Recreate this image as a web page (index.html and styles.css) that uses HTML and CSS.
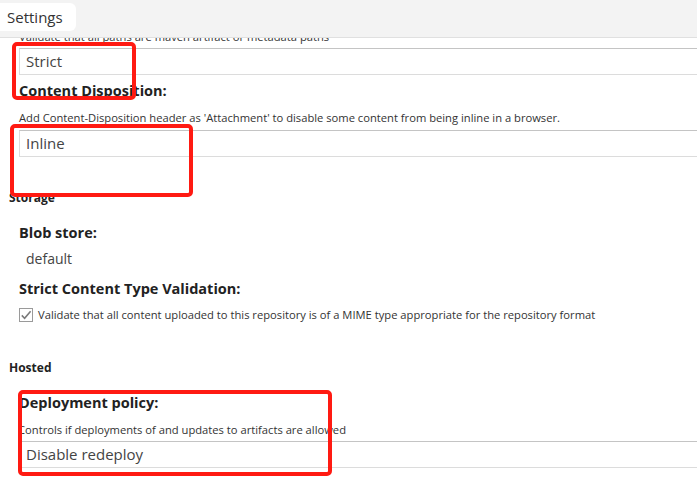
FILE: index.html
```html
<!DOCTYPE html>
<html>
<head>
<meta charset="utf-8">
<link rel="stylesheet" href="styles.css">
</head>
<body>
<div class="page">
  <div class="header">
    <div class="tab">Settings</div>
  </div>
  <div class="content">
    <div class="desc first">Validate that all paths are maven artifact or metadata paths</div>
    <div class="field field-a"><span>Strict</span></div>
    <div class="label l-cd">Content Disposition:</div>
    <div class="desc d-cd">Add Content-Disposition header as 'Attachment' to disable some content from being inline in a browser.</div>
    <div class="field field-b"><span>Inline</span></div>
    <div class="section s-storage">Storage</div>
    <div class="label l-blob">Blob store:</div>
    <div class="value">default</div>
    <div class="label l-strict">Strict Content Type Validation:</div>
    <div class="check-row">
      <svg class="checkbox" width="14" height="14" viewBox="0 0 14 14">
        <rect x="0.5" y="0.5" width="13" height="13" fill="#fff" stroke="#9a9a9a"/>
        <path d="M2.8 7.4 L5.6 10.2 L11.6 3.2" fill="none" stroke="#7a7a7a" stroke-width="1.6"/>
      </svg>
      <span class="desc inline">Validate that all content uploaded to this repository is of a MIME type appropriate for the repository format</span>
    </div>
    <div class="section s-hosted">Hosted</div>
    <div class="label l-deploy">Deployment policy:</div>
    <div class="desc d-deploy">Controls if deployments of and updates to artifacts are allowed</div>
    <div class="field field-c"><span>Disable redeploy</span></div>
  </div>
  <div class="mark m1"></div>
  <div class="mark m2"></div>
  <div class="mark m3"></div>
</div>
</body>
</html>
```
FILE: styles.css
```css
html, body {
  margin: 0;
  padding: 0;
  background: #fff;
}
.page {
  position: relative;
  width: 697px;
  height: 478px;
  overflow: hidden;
  font-family: "Open Sans", "Liberation Sans", sans-serif;
  color: #333;
}
.header {
  background: #f3f3f3;
  border-bottom: 1px solid #e0e0e0;
  display: flex;
  align-items: flex-start;
  padding-top: 3px;
  box-sizing: border-box;
  height: 38px;
}
.tab {
  background: #fff;
  width: 76px;
  height: 28px;
  border-radius: 0 6px 6px 0;
  font-size: 15px;
  line-height: 28px;
  padding-left: 7px;
  box-sizing: border-box;
  color: #333;
}
.content {
  overflow: hidden;
  height: 440px;
  padding-left: 19px;
}
.desc {
  font-size: 11.2px;
  line-height: 14px;
  color: #333;
  white-space: nowrap;
}
.first { margin-top: -8px; }
.field {
  width: 720px;
  height: 27px;
  box-sizing: border-box;
  border-top: 1px solid #c4c4c4;
  border-bottom: 1px solid #dcdcdc;
  border-left: 1px solid #dcdcdc;
  font-size: 15px;
  line-height: 25px;
  padding-left: 6px;
  color: #444;
}
.field-a { margin-top: 4px; }
.label {
  font-size: 14.5px;
  font-weight: bold;
  line-height: 18px;
  color: #222;
  white-space: nowrap;
}
.l-cd { margin-top: 7px; }
.d-cd { margin-top: 11px; }
.field-b { margin-top: 5px; }
.section {
  font-size: 12px;
  font-weight: bold;
  line-height: 16px;
  margin-left: -10px;
  color: #222;
}
.s-storage { margin-top: 33px; }
.l-blob { margin-top: 18px; }
.value {
  font-size: 14px;
  line-height: 18px;
  margin-top: 8px;
  padding-left: 7px;
  color: #444;
}
.l-strict { margin-top: 12px; }
.check-row {
  display: flex;
  align-items: center;
  gap: 5px;
  height: 16px;
  margin-top: 9px;
}
.checkbox { flex: none; }
.s-hosted { margin-top: 37px; }
.l-deploy { margin-top: 18px; }
.d-deploy { margin-top: 11px; margin-left: -1px; }
.field-c { margin-top: 4px; }
.mark {
  position: absolute;
  border: 4px solid #ff1a12;
  border-radius: 5px;
  box-sizing: border-box;
}
.m1 { left: 12px; top: 42px; width: 124px; height: 58px; }
.m2 { left: 10px; top: 124px; width: 183px; height: 73px; }
.m3 { left: 18px; top: 390px; width: 314px; height: 86px; }
```
